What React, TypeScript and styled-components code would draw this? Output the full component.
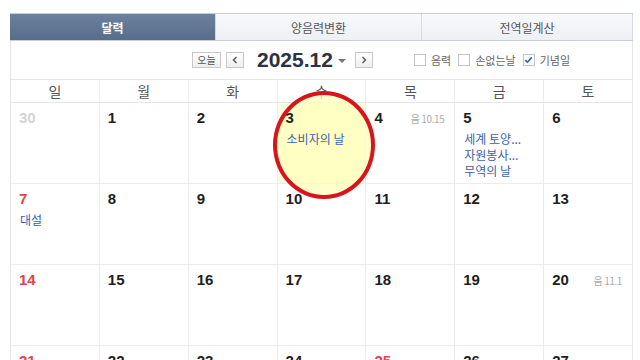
import React from "react";
import styled, { createGlobalStyle } from "styled-components";

const Global = createGlobalStyle`
  html, body { margin: 0; padding: 0; background: #fff; }
  body { font-family: "Noto Sans CJK KR", "Liberation Sans", sans-serif; }
`;

const Page = styled.div`
  width: 640px;
  height: 360px;
  overflow: hidden;
  padding: 13px 0 0 10px;
  box-sizing: border-box;
`;

const Frame = styled.div`
  width: 623px;
`;

const Tabs = styled.div`
  display: grid;
  grid-template-columns: 206px 206px 1fr;
  height: 28px;
  border-top: 1px solid #c9ced5;
  border-bottom: 1px solid #c9ced5;
  box-sizing: border-box;
`;

const Tab = styled.div<{ $active?: boolean }>`
  display: flex;
  align-items: center;
  justify-content: center;
  font-size: 12px;
  font-weight: ${(p) => (p.$active ? 700 : 400)};
  color: ${(p) => (p.$active ? "#fff" : "#555")};
  background: ${(p) =>
    p.$active
      ? "linear-gradient(#6c819c, #566d8b)"
      : "linear-gradient(#f8f9fb, #edf0f4)"};
  border-right: 1px solid #d6dae0;
`;

const Toolbar = styled.div`
  height: 39px;
  display: flex;
  align-items: center;
  padding-left: 181px;
  border-left: 1px solid #e4e4e4;
  border-right: 1px solid #e4e4e4;
  border-bottom: 1px solid #e4e4e4;
  box-sizing: border-box;
`;

const SmallBtn = styled.div<{ $w: number; $gap?: number }>`
  width: ${(p) => p.$w}px;
  height: 16px;
  margin-left: ${(p) => p.$gap ?? 0}px;
  box-sizing: border-box;
  border: 1px solid #c8c8c8;
  background: linear-gradient(#ffffff, #eeeeee);
  display: flex;
  align-items: center;
  justify-content: center;
  font-size: 10px;
  color: #555;
  line-height: 1;
`;

const MonthTitle = styled.div`
  font-family: "Liberation Sans", Arial, sans-serif;
  font-weight: 700;
  font-size: 21px;
  color: #2d3140;
  margin-left: 13px;
`;

const Caret = styled.div`
  width: 0;
  height: 0;
  border-left: 4px solid transparent;
  border-right: 4px solid transparent;
  border-top: 4px solid #777;
  margin: 2px 0 0 5px;
`;

const Checks = styled.div`
  display: flex;
  align-items: center;
  margin-left: 41px;
  gap: 7px;
`;

const Check = styled.label`
  display: flex;
  align-items: center;
  gap: 5px;
  font-size: 11px;
  color: #666;
`;

const Box = styled.span`
  width: 12px;
  height: 12px;
  box-sizing: border-box;
  border: 1px solid #c4c4c4;
  background: #fff;
  display: flex;
  align-items: center;
  justify-content: center;
`;

const Grid = styled.div`
  display: grid;
  grid-template-columns: repeat(7, 1fr);
  border-left: 1px solid #e6e6e6;
`;

const HeadCell = styled.div`
  height: 23px;
  display: flex;
  align-items: center;
  justify-content: center;
  font-size: 14px;
  color: #555;
  border-right: 1px solid #ececec;
  border-bottom: 1px solid #e6e6e6;
  box-sizing: border-box;
`;

const Cell = styled.div<{ $today?: boolean }>`
  position: relative;
  height: 81px;
  box-sizing: border-box;
  border-right: 1px solid #ececec;
  border-bottom: 1px solid #ececec;
  padding: 6px 8px 0 8px;
  background: ${(p) => (p.$today ? "#fdfde4" : "#fff")};
`;

const CellTop = styled.div`
  position: relative;
  z-index: 3;
  display: flex;
  justify-content: space-between;
  align-items: baseline;
`;

const DayNum = styled.span<{ $tone: "normal" | "red" | "muted" }>`
  font-family: "Liberation Sans", Arial, sans-serif;
  font-weight: 700;
  font-size: 15px;
  color: ${(p) =>
    p.$tone === "red" ? "#e5424d" : p.$tone === "muted" ? "#d4d4d4" : "#1e1e1e"};
`;

const Lunar = styled.span`
  font-size: 10px;
  color: #aaa;
  letter-spacing: -0.4px;
  margin-right: 2px;
`;

const Events = styled.div`
  position: relative;
  z-index: 3;
  margin-top: 5px;
  padding-left: 1px;
`;

const EventLine = styled.div`
  font-size: 12px;
  line-height: 16px;
  color: #3d5fae;
  white-space: nowrap;
`;

const Circle = styled.div`
  position: absolute;
  left: -5px;
  top: -12px;
  width: 102px;
  height: 108px;
  box-sizing: border-box;
  border: 4px solid #d8141c;
  border-radius: 50%;
  background: rgba(255, 255, 185, 0.75);
  pointer-events: none;
  z-index: 2;
`;

type Day = {
  n: number;
  tone?: "normal" | "red" | "muted";
  lunar?: string;
  events?: string[];
  today?: boolean;
};

const weeks: Day[][] = [
  [
    { n: 30, tone: "muted" },
    { n: 1 },
    { n: 2 },
    { n: 3, today: true, events: ["소비자의 날"] },
    { n: 4, lunar: "음 10.15" },
    { n: 5, events: ["세계 토양...", "자원봉사...", "무역의 날"] },
    { n: 6 },
  ],
  [
    { n: 7, tone: "red", events: ["대설"] },
    { n: 8 },
    { n: 9 },
    { n: 10 },
    { n: 11 },
    { n: 12 },
    { n: 13 },
  ],
  [
    { n: 14, tone: "red" },
    { n: 15 },
    { n: 16 },
    { n: 17 },
    { n: 18 },
    { n: 19 },
    { n: 20, lunar: "음 11.1" },
  ],
  [
    { n: 21, tone: "red" },
    { n: 22 },
    { n: 23 },
    { n: 24 },
    { n: 25, tone: "red" },
    { n: 26 },
    { n: 27 },
  ],
];

const heads = ["일", "월", "화", "수", "목", "금", "토"];

export default function App() {
  return (
    <Page>
      <Global />
      <Frame>
        <Tabs>
          <Tab $active>달력</Tab>
          <Tab>양음력변환</Tab>
          <Tab>전역일계산</Tab>
        </Tabs>
        <Toolbar>
          <SmallBtn $w={29}>오늘</SmallBtn>
          <SmallBtn $w={18} $gap={5}>
            <svg width="6" height="8" viewBox="0 0 6 8">
              <path d="M4.5 1 L1.5 4 L4.5 7" fill="none" stroke="#555" strokeWidth="1.4" />
            </svg>
          </SmallBtn>
          <MonthTitle>2025.12</MonthTitle>
          <Caret />
          <SmallBtn $w={18} $gap={9}>
            <svg width="6" height="8" viewBox="0 0 6 8">
              <path d="M1.5 1 L4.5 4 L1.5 7" fill="none" stroke="#555" strokeWidth="1.4" />
            </svg>
          </SmallBtn>
          <Checks>
            <Check>
              <Box />
              음력
            </Check>
            <Check>
              <Box />
              손없는날
            </Check>
            <Check>
              <Box>
                <svg width="9" height="8" viewBox="0 0 9 8">
                  <path d="M1.2 4.2 L3.4 6.2 L7.8 1.4" fill="none" stroke="#2e5fb5" strokeWidth="1.6" />
                </svg>
              </Box>
              기념일
            </Check>
          </Checks>
        </Toolbar>
        <Grid>
          {heads.map((h) => (
            <HeadCell key={h}>{h}</HeadCell>
          ))}
          {weeks.flat().map((d, i) => (
            <Cell key={i} $today={d.today}>
              <CellTop>
                <DayNum $tone={d.tone ?? "normal"}>{d.n}</DayNum>
                {d.lunar && <Lunar>{d.lunar}</Lunar>}
              </CellTop>
              {d.events && (
                <Events>
                  {d.events.map((e) => (
                    <EventLine key={e}>{e}</EventLine>
                  ))}
                </Events>
              )}
              {d.today && <Circle />}
            </Cell>
          ))}
        </Grid>
      </Frame>
    </Page>
  );
}
